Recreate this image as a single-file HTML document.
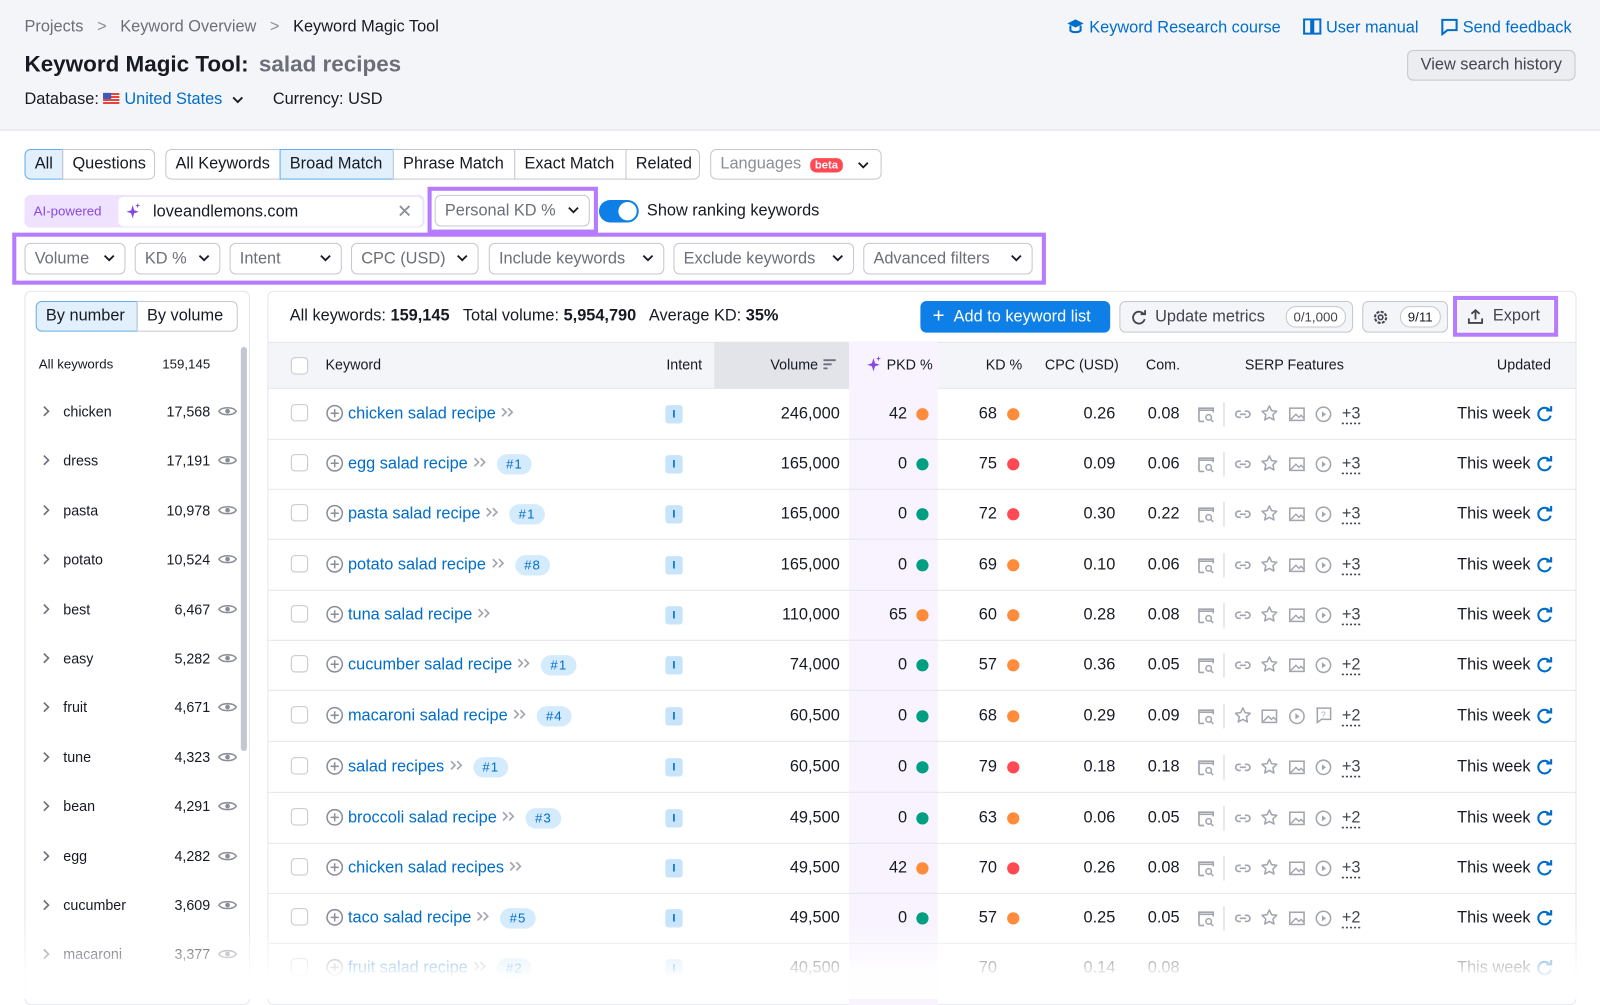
<!DOCTYPE html>
<html><head><meta charset="utf-8"><style>
*{box-sizing:border-box;margin:0;padding:0}
body{width:1600px;height:979px;overflow:hidden;background:#fff;font-family:"Liberation Sans",sans-serif;color:#171a22;position:relative;font-size:15px}
#w{position:absolute;left:0;top:0;width:1568px;height:960px;transform:scale(1.0204);transform-origin:0 0}
.a{position:absolute;white-space:nowrap}
.hdr{position:absolute;left:0;top:0;width:1600px;height:128px;background:#f4f5f9;border-bottom:1px solid #dfe1e7}
.blue{color:#006dca}
.btn{position:absolute;height:30px;border:1px solid #c4c7cf;background:#fff;font-size:16px;line-height:28px;padding:0 9px;color:#171a22}
.sel{background:#e1f0fc;border-color:#64aee9;color:#171a22}
.dd{position:absolute;height:31px;border:1px solid #c4c7cf;border-radius:6px;background:#fff;font-size:16px;line-height:29px;padding:0 9px;color:#6c6e79}
.dd svg{position:absolute;right:9px;top:10px}
.cb{position:absolute;width:17px;height:17px;border:1px solid #c4c7cf;border-radius:4px;background:#fff}
.row{position:absolute;left:263px;width:1281px;height:50px;border-bottom:1px solid #e4e6ec;font-size:16px}
.row .a{line-height:49px}
.kw{color:#006dca}
.bdg{display:inline-block;background:#d3ebfd;color:#006dca;border-radius:11px;font-size:13px;line-height:20px;padding:0 9px;margin-left:10px;letter-spacing:1px}
.int{position:absolute;left:389px;top:16px;width:17px;height:18px;background:#c8e4fb;color:#006dca;font-size:11px;line-height:18px;text-align:center;border-radius:3px;font-weight:bold}
.dot{position:absolute;width:12px;height:12px;border-radius:6px;top:19px}
.o{background:#ff8c3a}.g{background:#009f81}.rd{background:#ff4953}
.sb{position:absolute;left:25px;width:200px;height:48px;font-size:14px}
.sb .a{line-height:48px}
.fade{position:absolute;left:0;top:905px;width:1600px;height:74px;background:linear-gradient(rgba(255,255,255,0),rgba(255,255,255,.95) 70%)}
</style></head><body>
<svg width="0" height="0" style="position:absolute">
<defs>
<symbol id="car" viewBox="0 0 12 8"><path d="M1.5 1.5l4.5 4.5 4.5-4.5" fill="none" stroke="#171a22" stroke-width="1.8"/></symbol>
<symbol id="pc" viewBox="0 0 18 18"><circle cx="9" cy="9" r="7.5" fill="none" stroke="#8b8e98" stroke-width="1.5"/><path d="M9 5v8M5 9h8" stroke="#8b8e98" stroke-width="1.5"/></symbol>
<symbol id="ch" viewBox="0 0 14 12"><path d="M2 2l4 4-4 4M8 2l4 4-4 4" fill="none" stroke="#a2a5ae" stroke-width="1.6"/></symbol>
<symbol id="sv" viewBox="0 0 18 18"><path d="M2 16V3h14v4M2 16h5" fill="none" stroke="#a2a5ae" stroke-width="1.6"/><path d="M2 5h14" stroke="#a2a5ae" stroke-width="1.6"/><circle cx="11.5" cy="12" r="2.7" fill="none" stroke="#a2a5ae" stroke-width="1.5"/><path d="M13.5 14l2.5 2.5" stroke="#a2a5ae" stroke-width="1.5"/></symbol>
<symbol id="ln" viewBox="0 0 18 18"><path d="M7 6H5a3 3 0 000 6h2M11 6h2a3 3 0 010 6h-2M6 9h6" fill="none" stroke="#a2a5ae" stroke-width="1.6"/></symbol>
<symbol id="st" viewBox="0 0 18 18"><path d="M9 1.8l2.2 4.6 5 .6-3.7 3.5 1 5L9 13l-4.5 2.5 1-5L1.8 7l5-.6z" fill="none" stroke="#a2a5ae" stroke-width="1.5" stroke-linejoin="round"/></symbol>
<symbol id="im" viewBox="0 0 18 18"><rect x="2" y="3" width="14" height="12" fill="none" stroke="#a2a5ae" stroke-width="1.5"/><path d="M3 14l5-5 3 3 2-2 3 3" fill="none" stroke="#a2a5ae" stroke-width="1.4"/></symbol>
<symbol id="pl" viewBox="0 0 18 18"><circle cx="9" cy="9" r="7" fill="none" stroke="#a2a5ae" stroke-width="1.5"/><path d="M7.5 6v6l4-3z" fill="#a2a5ae"/></symbol>
<symbol id="qq" viewBox="0 0 18 18"><path d="M2 2h14v11H7l-4 3V2z" fill="none" stroke="#a2a5ae" stroke-width="1.5"/><text x="9" y="11" font-size="8" text-anchor="middle" fill="#a2a5ae" font-family="Liberation Sans">?</text></symbol>
<symbol id="rf" viewBox="0 0 18 18"><path d="M14.5 5.5A6.5 6.5 0 1 0 15.5 11" fill="none" stroke="#006dca" stroke-width="2.2"/><path d="M11 5.5h5V1" fill="none" stroke="#006dca" stroke-width="2.2"/></symbol>
<symbol id="ey" viewBox="0 0 20 14"><path d="M1.5 7C4 2.5 16 2.5 18.5 7 16 11.5 4 11.5 1.5 7z" fill="none" stroke="#8b8e98" stroke-width="1.5"/><circle cx="10" cy="7" r="2.3" fill="#8b8e98"/></symbol>
<symbol id="sc" viewBox="0 0 10 12"><path d="M2 1.5l4.5 4.5L2 10.5" fill="none" stroke="#6c6e79" stroke-width="1.6"/></symbol>
</defs></svg>
<div id="w">
<div class="hdr"></div>
<div class="a" style="left:24px;top:18px;font-size:16px;color:#6c6e79">Projects &nbsp; <span style="color:#8b8e98">&gt;</span> &nbsp; Keyword Overview &nbsp; <span style="color:#8b8e98">&gt;</span> &nbsp; <span style="color:#171a22">Keyword Magic Tool</span></div>
<div class="a" style="left:24px;top:50px;font-size:22px;font-weight:bold">Keyword Magic Tool: <span style="color:#6c6e79;margin-left:4px">salad recipes</span></div>
<div class="a" style="left:24px;top:89px;font-size:16px">Database: <span style="display:inline-block;width:16px;height:11px;background:repeating-linear-gradient(#e6453e 0 2px,#fff 2px 3px);position:relative;vertical-align:0"><span style="position:absolute;left:0;top:0;width:8px;height:6px;background:#3b5cb8"></span></span> <span class="blue">United States</span> <svg width="12" height="8" style="margin-left:5px"><use href="#car" style="stroke:#006dca"/></svg><span style="margin-left:28px">Currency: USD</span></div>
<div class="a blue" style="left:1045px;top:18px;font-size:16px"><svg width="18" height="16" viewBox="0 0 18 16" style="vertical-align:-2px"><path d="M9 1L1 5l8 4 8-4z" fill="#006dca"/><path d="M4 7v5c2 2 8 2 10 0V7" fill="none" stroke="#006dca" stroke-width="2"/></svg> Keyword Research course</div>
<div class="a blue" style="left:1277px;top:18px;font-size:16px"><svg width="18" height="16" viewBox="0 0 18 16" style="vertical-align:-2px"><path d="M1 1h7v14H1zM10 1h7v14h-7z" fill="none" stroke="#006dca" stroke-width="2"/></svg> User manual</div>
<div class="a blue" style="left:1412px;top:18px;font-size:16px"><svg width="17" height="17" viewBox="0 0 17 17" style="vertical-align:-3px"><path d="M1.5 1.5h14v10h-9l-5 4z" fill="none" stroke="#006dca" stroke-width="2"/></svg> Send feedback</div>
<div class="a" style="left:1379px;top:49px;width:165px;height:30px;border:1px solid #c4c7cf;border-radius:6px;background:#ebedf1;font-size:16px;line-height:28px;text-align:center;color:#42454f">View search history</div>

<div class="btn sel" style="left:24px;top:146px;width:38px;border-radius:6px 0 0 6px">All</div>
<div class="btn" style="left:61px;top:146px;width:91px;border-radius:0 6px 6px 0">Questions</div>
<div class="btn" style="left:162px;top:146px;width:113px;border-radius:6px 0 0 6px">All Keywords</div>
<div class="btn sel" style="left:274px;top:146px;width:112px">Broad Match</div>
<div class="btn" style="left:385px;top:146px;width:120px">Phrase Match</div>
<div class="btn" style="left:504px;top:146px;width:110px">Exact Match</div>
<div class="btn" style="left:613px;top:146px;width:73px;border-radius:0 6px 6px 0">Related</div>
<div class="btn" style="left:696px;top:146px;width:168px;border-radius:6px;color:#8b8e98">Languages <span style="background:#ff4953;color:#fff;font-size:11px;font-weight:bold;border-radius:6px;padding:1px 5px;margin-left:4px">beta</span><svg width="12" height="8" style="position:absolute;right:11px;top:11px"><use href="#car"/></svg></div>

<div class="a" style="left:24px;top:191px;width:392px;height:32px;background:#efe2fe;border-radius:6px"></div>
<div class="a" style="left:33px;top:199px;font-size:13px;color:#8649e1">AI-powered</div>
<div class="a" style="left:116px;top:193px;width:298px;height:29px;background:#fff;border-radius:5px;font-size:16px;line-height:29px;padding-left:34px">loveandlemons.com<svg width="14" height="16" viewBox="0 0 14 16" style="position:absolute;left:8px;top:6px"><path d="M6 2l1.5 5L12 8.5 7.5 10 6 15 4.5 10 0 8.5 4.5 7z" fill="#8649e1"/><path d="M11 0l.6 1.8 1.8.6-1.8.6L11 5l-.6-1.8L8.6 2.4l1.8-.6z" fill="#8649e1"/></svg><span style="position:absolute;right:10px;top:0;color:#8b8e98;font-size:18px">✕</span></div>
<div class="a" style="left:419px;top:183px;width:167px;height:46px;border:4px solid #b67cff"></div>
<div class="dd" style="left:426px;top:191px;width:152px">Personal KD %<svg width="12" height="8"><use href="#car"/></svg></div>
<div class="a" style="left:587px;top:196px;width:39px;height:22px;border-radius:11px;background:#0e7fe6"><div style="position:absolute;right:2px;top:2px;width:18px;height:18px;border-radius:9px;background:#fff"></div></div>
<div class="a" style="left:634px;top:198px;font-size:16px">Show ranking keywords</div>

<div class="a" style="left:12px;top:228px;width:1013px;height:51px;border:4px solid #b67cff"></div>
<div class="dd" style="left:24px;top:238px;width:99px">Volume<svg width="12" height="8"><use href="#car"/></svg></div>
<div class="dd" style="left:132px;top:238px;width:84px">KD %<svg width="12" height="8"><use href="#car"/></svg></div>
<div class="dd" style="left:225px;top:238px;width:110px">Intent<svg width="12" height="8"><use href="#car"/></svg></div>
<div class="dd" style="left:344px;top:238px;width:125px">CPC (USD)<svg width="12" height="8"><use href="#car"/></svg></div>
<div class="dd" style="left:479px;top:238px;width:172px">Include keywords<svg width="12" height="8"><use href="#car"/></svg></div>
<div class="dd" style="left:660px;top:238px;width:177px">Exclude keywords<svg width="12" height="8"><use href="#car"/></svg></div>
<div class="dd" style="left:846px;top:238px;width:166px">Advanced filters<svg width="12" height="8"><use href="#car"/></svg></div>

<div class="a" style="left:24px;top:285px;width:221px;height:700px;border:1px solid #e4e6ec;border-radius:6px"></div>
<div class="btn sel" style="left:35px;top:295px;width:100px;border-radius:6px 0 0 6px">By number</div>
<div class="btn" style="left:134px;top:295px;width:99px;border-radius:0 6px 6px 0">By volume</div>
<div class="a" style="left:38px;top:349px;font-size:13px">All keywords</div>
<div class="a" style="left:159px;top:349px;font-size:13px">159,145</div>
<div class="a" style="left:236px;top:340px;width:6px;height:396px;background:#c4c7cf;border-radius:3px"></div>
<div class="sb" style="top:379px"><svg class="a" width="10" height="12" style="left:16px;top:18px"><use href="#sc"/></svg><span class="a" style="left:37px">chicken</span><span class="a" style="right:19px">17,568</span><svg class="a" width="20" height="14" style="left:188px;top:17px"><use href="#ey"/></svg></div>
<div class="sb" style="top:427px"><svg class="a" width="10" height="12" style="left:16px;top:18px"><use href="#sc"/></svg><span class="a" style="left:37px">dress</span><span class="a" style="right:19px">17,191</span><svg class="a" width="20" height="14" style="left:188px;top:17px"><use href="#ey"/></svg></div>
<div class="sb" style="top:476px"><svg class="a" width="10" height="12" style="left:16px;top:18px"><use href="#sc"/></svg><span class="a" style="left:37px">pasta</span><span class="a" style="right:19px">10,978</span><svg class="a" width="20" height="14" style="left:188px;top:17px"><use href="#ey"/></svg></div>
<div class="sb" style="top:524px"><svg class="a" width="10" height="12" style="left:16px;top:18px"><use href="#sc"/></svg><span class="a" style="left:37px">potato</span><span class="a" style="right:19px">10,524</span><svg class="a" width="20" height="14" style="left:188px;top:17px"><use href="#ey"/></svg></div>
<div class="sb" style="top:573px"><svg class="a" width="10" height="12" style="left:16px;top:18px"><use href="#sc"/></svg><span class="a" style="left:37px">best</span><span class="a" style="right:19px">6,467</span><svg class="a" width="20" height="14" style="left:188px;top:17px"><use href="#ey"/></svg></div>
<div class="sb" style="top:621px"><svg class="a" width="10" height="12" style="left:16px;top:18px"><use href="#sc"/></svg><span class="a" style="left:37px">easy</span><span class="a" style="right:19px">5,282</span><svg class="a" width="20" height="14" style="left:188px;top:17px"><use href="#ey"/></svg></div>
<div class="sb" style="top:669px"><svg class="a" width="10" height="12" style="left:16px;top:18px"><use href="#sc"/></svg><span class="a" style="left:37px">fruit</span><span class="a" style="right:19px">4,671</span><svg class="a" width="20" height="14" style="left:188px;top:17px"><use href="#ey"/></svg></div>
<div class="sb" style="top:718px"><svg class="a" width="10" height="12" style="left:16px;top:18px"><use href="#sc"/></svg><span class="a" style="left:37px">tune</span><span class="a" style="right:19px">4,323</span><svg class="a" width="20" height="14" style="left:188px;top:17px"><use href="#ey"/></svg></div>
<div class="sb" style="top:766px"><svg class="a" width="10" height="12" style="left:16px;top:18px"><use href="#sc"/></svg><span class="a" style="left:37px">bean</span><span class="a" style="right:19px">4,291</span><svg class="a" width="20" height="14" style="left:188px;top:17px"><use href="#ey"/></svg></div>
<div class="sb" style="top:815px"><svg class="a" width="10" height="12" style="left:16px;top:18px"><use href="#sc"/></svg><span class="a" style="left:37px">egg</span><span class="a" style="right:19px">4,282</span><svg class="a" width="20" height="14" style="left:188px;top:17px"><use href="#ey"/></svg></div>
<div class="sb" style="top:863px"><svg class="a" width="10" height="12" style="left:16px;top:18px"><use href="#sc"/></svg><span class="a" style="left:37px">cucumber</span><span class="a" style="right:19px">3,609</span><svg class="a" width="20" height="14" style="left:188px;top:17px"><use href="#ey"/></svg></div>
<div class="sb" style="top:911px"><svg class="a" width="10" height="12" style="left:16px;top:18px"><use href="#sc"/></svg><span class="a" style="left:37px">macaroni</span><span class="a" style="right:19px">3,377</span><svg class="a" width="20" height="14" style="left:188px;top:17px"><use href="#ey"/></svg></div>

<div class="a" style="left:262px;top:285px;width:1283px;height:700px;border:1px solid #e4e6ec;border-radius:6px"></div>
<div class="a" style="left:284px;top:301px;font-size:16px">All keywords: <b>159,145</b> &nbsp; Total volume: <b>5,954,790</b> &nbsp; Average KD: <b>35%</b></div>
<div class="a" style="left:902px;top:295px;width:186px;height:31px;background:#0e7fe6;border-radius:6px;color:#fff;font-size:16px;line-height:31px;padding-left:12px"><span style="font-size:20px;vertical-align:-1px">+</span>&nbsp;&nbsp;Add to keyword list</div>
<div class="a" style="left:1097px;top:295px;width:229px;height:31px;background:#f4f5f9;border:1px solid #c4c7cf;border-radius:6px;font-size:16px;line-height:29px;padding-left:34px;color:#42454f">Update metrics<span style="position:absolute;right:6px;top:4px;height:21px;line-height:19px;border:1px solid #c4c7cf;border-radius:10px;background:#fff;font-size:13px;padding:0 7px">0/1,000</span><svg width="16" height="16" viewBox="0 0 18 18" style="position:absolute;left:10px;top:7px"><path d="M14.5 5.5A6.5 6.5 0 1 0 15.5 11" fill="none" stroke="#42454f" stroke-width="2"/><path d="M11 5.5h5V1" fill="none" stroke="#42454f" stroke-width="2"/></svg></div>
<div class="a" style="left:1335px;top:295px;width:84px;height:31px;background:#f4f5f9;border:1px solid #c4c7cf;border-radius:6px"><svg width="18" height="18" viewBox="0 0 18 18" style="position:absolute;left:8px;top:6px"><circle cx="9" cy="9" r="5.5" fill="none" stroke="#42454f" stroke-width="2" stroke-dasharray="3 1.3"/><circle cx="9" cy="9" r="2.2" fill="none" stroke="#42454f" stroke-width="1.6"/></svg><span style="position:absolute;right:6px;top:4px;height:21px;line-height:19px;border:1px solid #c4c7cf;border-radius:10px;background:#fff;font-size:13px;padding:0 7px">9/11</span></div>
<div class="a" style="left:1424px;top:290px;width:103px;height:40px;border:4px solid #b67cff"></div>
<div class="a" style="left:1429px;top:295px;width:93px;height:30px;background:#f4f5f9;font-size:16px;line-height:30px;padding-left:34px;color:#42454f">Export<svg width="16" height="16" viewBox="0 0 16 16" style="position:absolute;left:9px;top:7px"><path d="M8 11V2M4 5.5L8 2l4 3.5M1.5 10v4.5h13V10" fill="none" stroke="#42454f" stroke-width="1.8"/></svg></div>

<div class="a" style="left:263px;top:335px;width:1281px;height:46px;background:#f4f5f9;border-top:1px solid #e4e6ec;border-bottom:1px solid #e4e6ec"></div>
<div class="a" style="left:700px;top:335px;width:132px;height:46px;background:#e2e4ea"></div>
<div class="a" style="left:832px;top:335px;width:87px;height:650px;background:#f8f3ff"></div>
<div class="cb" style="left:285px;top:350px"></div>
<div class="a" style="left:319px;top:349px;font-size:14px">Keyword</div>
<div class="a" style="left:653px;top:349px;font-size:14px">Intent</div>
<div class="a" style="left:755px;top:349px;font-size:14px">Volume <svg width="14" height="12" style="vertical-align:-1px"><path d="M1 2h12M1 6h8M1 10h4" stroke="#6c6e79" stroke-width="1.8"/></svg></div>
<div class="a" style="left:849px;top:349px;font-size:14px"><svg width="16" height="16" viewBox="0 0 14 16" style="vertical-align:-3px"><path d="M6 2l1.5 5L12 8.5 7.5 10 6 15 4.5 10 0 8.5 4.5 7z" fill="#8649e1"/><path d="M11 0l.6 1.8 1.8.6-1.8.6L11 5l-.6-1.8L8.6 2.4l1.8-.6z" fill="#8649e1"/></svg> PKD %</div>
<div class="a" style="left:966px;top:349px;font-size:14px">KD %</div>
<div class="a" style="left:1024px;top:349px;font-size:14px">CPC (USD)</div>
<div class="a" style="left:1123px;top:349px;font-size:14px">Com.</div>
<div class="a" style="left:1220px;top:349px;font-size:14px">SERP Features</div>
<div class="a" style="left:1467px;top:349px;font-size:14px">Updated</div>

<div class="row" style="top:381px"><div class="cb" style="left:22px;top:15px"></div><svg class="a" width="18" height="18" style="left:56px;top:15px"><use href="#pc"/></svg><span class="a kw" style="left:78px">chicken salad recipe <svg width="14" height="12"><use href="#ch"/></svg></span><div class="int">I</div><span class="a" style="right:721px">246,000</span><span class="a" style="right:655px">42</span><div class="dot o" style="left:635px"></div><span class="a" style="right:567px">68</span><div class="dot o" style="left:724px"></div><span class="a" style="right:451px">0.26</span><span class="a" style="right:388px">0.08</span><svg class="a" width="18" height="18" style="left:910px;top:16px"><use href="#sv"/></svg><div class="a" style="left:936px;top:13px;width:1px;height:24px;background:#d0d2d8"></div><svg class="a" width="18" height="18" style="left:946px;top:16px"><use href="#ln"/></svg><svg class="a" width="18" height="18" style="left:972px;top:15px"><use href="#st"/></svg><svg class="a" width="18" height="18" style="left:999px;top:16px"><use href="#im"/></svg><svg class="a" width="18" height="18" style="left:1025px;top:16px"><use href="#pl"/></svg><span class="a" style="left:1052px;color:#42454f"><u style="text-decoration:underline dotted;text-underline-offset:5px">+3</u></span><span class="a" style="right:44px">This week</span><svg class="a" width="17" height="17" style="left:1242px;top:16px"><use href="#rf"/></svg></div>

<div class="row" style="top:430px"><div class="cb" style="left:22px;top:15px"></div><svg class="a" width="18" height="18" style="left:56px;top:15px"><use href="#pc"/></svg><span class="a kw" style="left:78px">egg salad recipe <svg width="14" height="12"><use href="#ch"/></svg><span class="bdg">#1</span></span><div class="int">I</div><span class="a" style="right:721px">165,000</span><span class="a" style="right:655px">0</span><div class="dot g" style="left:635px"></div><span class="a" style="right:567px">75</span><div class="dot rd" style="left:724px"></div><span class="a" style="right:451px">0.09</span><span class="a" style="right:388px">0.06</span><svg class="a" width="18" height="18" style="left:910px;top:16px"><use href="#sv"/></svg><div class="a" style="left:936px;top:13px;width:1px;height:24px;background:#d0d2d8"></div><svg class="a" width="18" height="18" style="left:946px;top:16px"><use href="#ln"/></svg><svg class="a" width="18" height="18" style="left:972px;top:15px"><use href="#st"/></svg><svg class="a" width="18" height="18" style="left:999px;top:16px"><use href="#im"/></svg><svg class="a" width="18" height="18" style="left:1025px;top:16px"><use href="#pl"/></svg><span class="a" style="left:1052px;color:#42454f"><u style="text-decoration:underline dotted;text-underline-offset:5px">+3</u></span><span class="a" style="right:44px">This week</span><svg class="a" width="17" height="17" style="left:1242px;top:16px"><use href="#rf"/></svg></div>

<div class="row" style="top:479px"><div class="cb" style="left:22px;top:15px"></div><svg class="a" width="18" height="18" style="left:56px;top:15px"><use href="#pc"/></svg><span class="a kw" style="left:78px">pasta salad recipe <svg width="14" height="12"><use href="#ch"/></svg><span class="bdg">#1</span></span><div class="int">I</div><span class="a" style="right:721px">165,000</span><span class="a" style="right:655px">0</span><div class="dot g" style="left:635px"></div><span class="a" style="right:567px">72</span><div class="dot rd" style="left:724px"></div><span class="a" style="right:451px">0.30</span><span class="a" style="right:388px">0.22</span><svg class="a" width="18" height="18" style="left:910px;top:16px"><use href="#sv"/></svg><div class="a" style="left:936px;top:13px;width:1px;height:24px;background:#d0d2d8"></div><svg class="a" width="18" height="18" style="left:946px;top:16px"><use href="#ln"/></svg><svg class="a" width="18" height="18" style="left:972px;top:15px"><use href="#st"/></svg><svg class="a" width="18" height="18" style="left:999px;top:16px"><use href="#im"/></svg><svg class="a" width="18" height="18" style="left:1025px;top:16px"><use href="#pl"/></svg><span class="a" style="left:1052px;color:#42454f"><u style="text-decoration:underline dotted;text-underline-offset:5px">+3</u></span><span class="a" style="right:44px">This week</span><svg class="a" width="17" height="17" style="left:1242px;top:16px"><use href="#rf"/></svg></div>

<div class="row" style="top:529px"><div class="cb" style="left:22px;top:15px"></div><svg class="a" width="18" height="18" style="left:56px;top:15px"><use href="#pc"/></svg><span class="a kw" style="left:78px">potato salad recipe <svg width="14" height="12"><use href="#ch"/></svg><span class="bdg">#8</span></span><div class="int">I</div><span class="a" style="right:721px">165,000</span><span class="a" style="right:655px">0</span><div class="dot g" style="left:635px"></div><span class="a" style="right:567px">69</span><div class="dot o" style="left:724px"></div><span class="a" style="right:451px">0.10</span><span class="a" style="right:388px">0.06</span><svg class="a" width="18" height="18" style="left:910px;top:16px"><use href="#sv"/></svg><div class="a" style="left:936px;top:13px;width:1px;height:24px;background:#d0d2d8"></div><svg class="a" width="18" height="18" style="left:946px;top:16px"><use href="#ln"/></svg><svg class="a" width="18" height="18" style="left:972px;top:15px"><use href="#st"/></svg><svg class="a" width="18" height="18" style="left:999px;top:16px"><use href="#im"/></svg><svg class="a" width="18" height="18" style="left:1025px;top:16px"><use href="#pl"/></svg><span class="a" style="left:1052px;color:#42454f"><u style="text-decoration:underline dotted;text-underline-offset:5px">+3</u></span><span class="a" style="right:44px">This week</span><svg class="a" width="17" height="17" style="left:1242px;top:16px"><use href="#rf"/></svg></div>

<div class="row" style="top:578px"><div class="cb" style="left:22px;top:15px"></div><svg class="a" width="18" height="18" style="left:56px;top:15px"><use href="#pc"/></svg><span class="a kw" style="left:78px">tuna salad recipe <svg width="14" height="12"><use href="#ch"/></svg></span><div class="int">I</div><span class="a" style="right:721px">110,000</span><span class="a" style="right:655px">65</span><div class="dot o" style="left:635px"></div><span class="a" style="right:567px">60</span><div class="dot o" style="left:724px"></div><span class="a" style="right:451px">0.28</span><span class="a" style="right:388px">0.08</span><svg class="a" width="18" height="18" style="left:910px;top:16px"><use href="#sv"/></svg><div class="a" style="left:936px;top:13px;width:1px;height:24px;background:#d0d2d8"></div><svg class="a" width="18" height="18" style="left:946px;top:16px"><use href="#ln"/></svg><svg class="a" width="18" height="18" style="left:972px;top:15px"><use href="#st"/></svg><svg class="a" width="18" height="18" style="left:999px;top:16px"><use href="#im"/></svg><svg class="a" width="18" height="18" style="left:1025px;top:16px"><use href="#pl"/></svg><span class="a" style="left:1052px;color:#42454f"><u style="text-decoration:underline dotted;text-underline-offset:5px">+3</u></span><span class="a" style="right:44px">This week</span><svg class="a" width="17" height="17" style="left:1242px;top:16px"><use href="#rf"/></svg></div>

<div class="row" style="top:627px"><div class="cb" style="left:22px;top:15px"></div><svg class="a" width="18" height="18" style="left:56px;top:15px"><use href="#pc"/></svg><span class="a kw" style="left:78px">cucumber salad recipe <svg width="14" height="12"><use href="#ch"/></svg><span class="bdg">#1</span></span><div class="int">I</div><span class="a" style="right:721px">74,000</span><span class="a" style="right:655px">0</span><div class="dot g" style="left:635px"></div><span class="a" style="right:567px">57</span><div class="dot o" style="left:724px"></div><span class="a" style="right:451px">0.36</span><span class="a" style="right:388px">0.05</span><svg class="a" width="18" height="18" style="left:910px;top:16px"><use href="#sv"/></svg><div class="a" style="left:936px;top:13px;width:1px;height:24px;background:#d0d2d8"></div><svg class="a" width="18" height="18" style="left:946px;top:16px"><use href="#ln"/></svg><svg class="a" width="18" height="18" style="left:972px;top:15px"><use href="#st"/></svg><svg class="a" width="18" height="18" style="left:999px;top:16px"><use href="#im"/></svg><svg class="a" width="18" height="18" style="left:1025px;top:16px"><use href="#pl"/></svg><span class="a" style="left:1052px;color:#42454f"><u style="text-decoration:underline dotted;text-underline-offset:5px">+2</u></span><span class="a" style="right:44px">This week</span><svg class="a" width="17" height="17" style="left:1242px;top:16px"><use href="#rf"/></svg></div>

<div class="row" style="top:677px"><div class="cb" style="left:22px;top:15px"></div><svg class="a" width="18" height="18" style="left:56px;top:15px"><use href="#pc"/></svg><span class="a kw" style="left:78px">macaroni salad recipe <svg width="14" height="12"><use href="#ch"/></svg><span class="bdg">#4</span></span><div class="int">I</div><span class="a" style="right:721px">60,500</span><span class="a" style="right:655px">0</span><div class="dot g" style="left:635px"></div><span class="a" style="right:567px">68</span><div class="dot o" style="left:724px"></div><span class="a" style="right:451px">0.29</span><span class="a" style="right:388px">0.09</span><svg class="a" width="18" height="18" style="left:910px;top:16px"><use href="#sv"/></svg><div class="a" style="left:936px;top:13px;width:1px;height:24px;background:#d0d2d8"></div><svg class="a" width="18" height="18" style="left:946px;top:15px"><use href="#st"/></svg><svg class="a" width="18" height="18" style="left:972px;top:16px"><use href="#im"/></svg><svg class="a" width="18" height="18" style="left:999px;top:16px"><use href="#pl"/></svg><svg class="a" width="18" height="18" style="left:1025px;top:15px"><use href="#qq"/></svg><span class="a" style="left:1052px;color:#42454f"><u style="text-decoration:underline dotted;text-underline-offset:5px">+2</u></span><span class="a" style="right:44px">This week</span><svg class="a" width="17" height="17" style="left:1242px;top:16px"><use href="#rf"/></svg></div>

<div class="row" style="top:727px"><div class="cb" style="left:22px;top:15px"></div><svg class="a" width="18" height="18" style="left:56px;top:15px"><use href="#pc"/></svg><span class="a kw" style="left:78px">salad recipes <svg width="14" height="12"><use href="#ch"/></svg><span class="bdg">#1</span></span><div class="int">I</div><span class="a" style="right:721px">60,500</span><span class="a" style="right:655px">0</span><div class="dot g" style="left:635px"></div><span class="a" style="right:567px">79</span><div class="dot rd" style="left:724px"></div><span class="a" style="right:451px">0.18</span><span class="a" style="right:388px">0.18</span><svg class="a" width="18" height="18" style="left:910px;top:16px"><use href="#sv"/></svg><div class="a" style="left:936px;top:13px;width:1px;height:24px;background:#d0d2d8"></div><svg class="a" width="18" height="18" style="left:946px;top:16px"><use href="#ln"/></svg><svg class="a" width="18" height="18" style="left:972px;top:15px"><use href="#st"/></svg><svg class="a" width="18" height="18" style="left:999px;top:16px"><use href="#im"/></svg><svg class="a" width="18" height="18" style="left:1025px;top:16px"><use href="#pl"/></svg><span class="a" style="left:1052px;color:#42454f"><u style="text-decoration:underline dotted;text-underline-offset:5px">+3</u></span><span class="a" style="right:44px">This week</span><svg class="a" width="17" height="17" style="left:1242px;top:16px"><use href="#rf"/></svg></div>

<div class="row" style="top:777px"><div class="cb" style="left:22px;top:15px"></div><svg class="a" width="18" height="18" style="left:56px;top:15px"><use href="#pc"/></svg><span class="a kw" style="left:78px">broccoli salad recipe <svg width="14" height="12"><use href="#ch"/></svg><span class="bdg">#3</span></span><div class="int">I</div><span class="a" style="right:721px">49,500</span><span class="a" style="right:655px">0</span><div class="dot g" style="left:635px"></div><span class="a" style="right:567px">63</span><div class="dot o" style="left:724px"></div><span class="a" style="right:451px">0.06</span><span class="a" style="right:388px">0.05</span><svg class="a" width="18" height="18" style="left:910px;top:16px"><use href="#sv"/></svg><div class="a" style="left:936px;top:13px;width:1px;height:24px;background:#d0d2d8"></div><svg class="a" width="18" height="18" style="left:946px;top:16px"><use href="#ln"/></svg><svg class="a" width="18" height="18" style="left:972px;top:15px"><use href="#st"/></svg><svg class="a" width="18" height="18" style="left:999px;top:16px"><use href="#im"/></svg><svg class="a" width="18" height="18" style="left:1025px;top:16px"><use href="#pl"/></svg><span class="a" style="left:1052px;color:#42454f"><u style="text-decoration:underline dotted;text-underline-offset:5px">+2</u></span><span class="a" style="right:44px">This week</span><svg class="a" width="17" height="17" style="left:1242px;top:16px"><use href="#rf"/></svg></div>

<div class="row" style="top:826px"><div class="cb" style="left:22px;top:15px"></div><svg class="a" width="18" height="18" style="left:56px;top:15px"><use href="#pc"/></svg><span class="a kw" style="left:78px">chicken salad recipes <svg width="14" height="12"><use href="#ch"/></svg></span><div class="int">I</div><span class="a" style="right:721px">49,500</span><span class="a" style="right:655px">42</span><div class="dot o" style="left:635px"></div><span class="a" style="right:567px">70</span><div class="dot rd" style="left:724px"></div><span class="a" style="right:451px">0.26</span><span class="a" style="right:388px">0.08</span><svg class="a" width="18" height="18" style="left:910px;top:16px"><use href="#sv"/></svg><div class="a" style="left:936px;top:13px;width:1px;height:24px;background:#d0d2d8"></div><svg class="a" width="18" height="18" style="left:946px;top:16px"><use href="#ln"/></svg><svg class="a" width="18" height="18" style="left:972px;top:15px"><use href="#st"/></svg><svg class="a" width="18" height="18" style="left:999px;top:16px"><use href="#im"/></svg><svg class="a" width="18" height="18" style="left:1025px;top:16px"><use href="#pl"/></svg><span class="a" style="left:1052px;color:#42454f"><u style="text-decoration:underline dotted;text-underline-offset:5px">+3</u></span><span class="a" style="right:44px">This week</span><svg class="a" width="17" height="17" style="left:1242px;top:16px"><use href="#rf"/></svg></div>

<div class="row" style="top:875px"><div class="cb" style="left:22px;top:15px"></div><svg class="a" width="18" height="18" style="left:56px;top:15px"><use href="#pc"/></svg><span class="a kw" style="left:78px">taco salad recipe <svg width="14" height="12"><use href="#ch"/></svg><span class="bdg">#5</span></span><div class="int">I</div><span class="a" style="right:721px">49,500</span><span class="a" style="right:655px">0</span><div class="dot g" style="left:635px"></div><span class="a" style="right:567px">57</span><div class="dot o" style="left:724px"></div><span class="a" style="right:451px">0.25</span><span class="a" style="right:388px">0.05</span><svg class="a" width="18" height="18" style="left:910px;top:16px"><use href="#sv"/></svg><div class="a" style="left:936px;top:13px;width:1px;height:24px;background:#d0d2d8"></div><svg class="a" width="18" height="18" style="left:946px;top:16px"><use href="#ln"/></svg><svg class="a" width="18" height="18" style="left:972px;top:15px"><use href="#st"/></svg><svg class="a" width="18" height="18" style="left:999px;top:16px"><use href="#im"/></svg><svg class="a" width="18" height="18" style="left:1025px;top:16px"><use href="#pl"/></svg><span class="a" style="left:1052px;color:#42454f"><u style="text-decoration:underline dotted;text-underline-offset:5px">+2</u></span><span class="a" style="right:44px">This week</span><svg class="a" width="17" height="17" style="left:1242px;top:16px"><use href="#rf"/></svg></div>

<div class="row" style="top:924px;border:none"><div class="cb" style="left:22px;top:15px"></div><svg class="a" width="18" height="18" style="left:56px;top:15px"><use href="#pc"/></svg><span class="a kw" style="left:78px">fruit salad recipe <svg width="14" height="12"><use href="#ch"/></svg><span class="bdg">#2</span></span><div class="int">I</div><span class="a" style="right:721px">40,500</span><span class="a" style="right:567px">70</span><span class="a" style="right:451px">0.14</span><span class="a" style="right:388px">0.08</span><span class="a" style="right:44px">This week</span><svg class="a" width="17" height="17" style="left:1242px;top:16px"><use href="#rf"/></svg></div>

<div class="fade"></div>
</div>
</body></html>
